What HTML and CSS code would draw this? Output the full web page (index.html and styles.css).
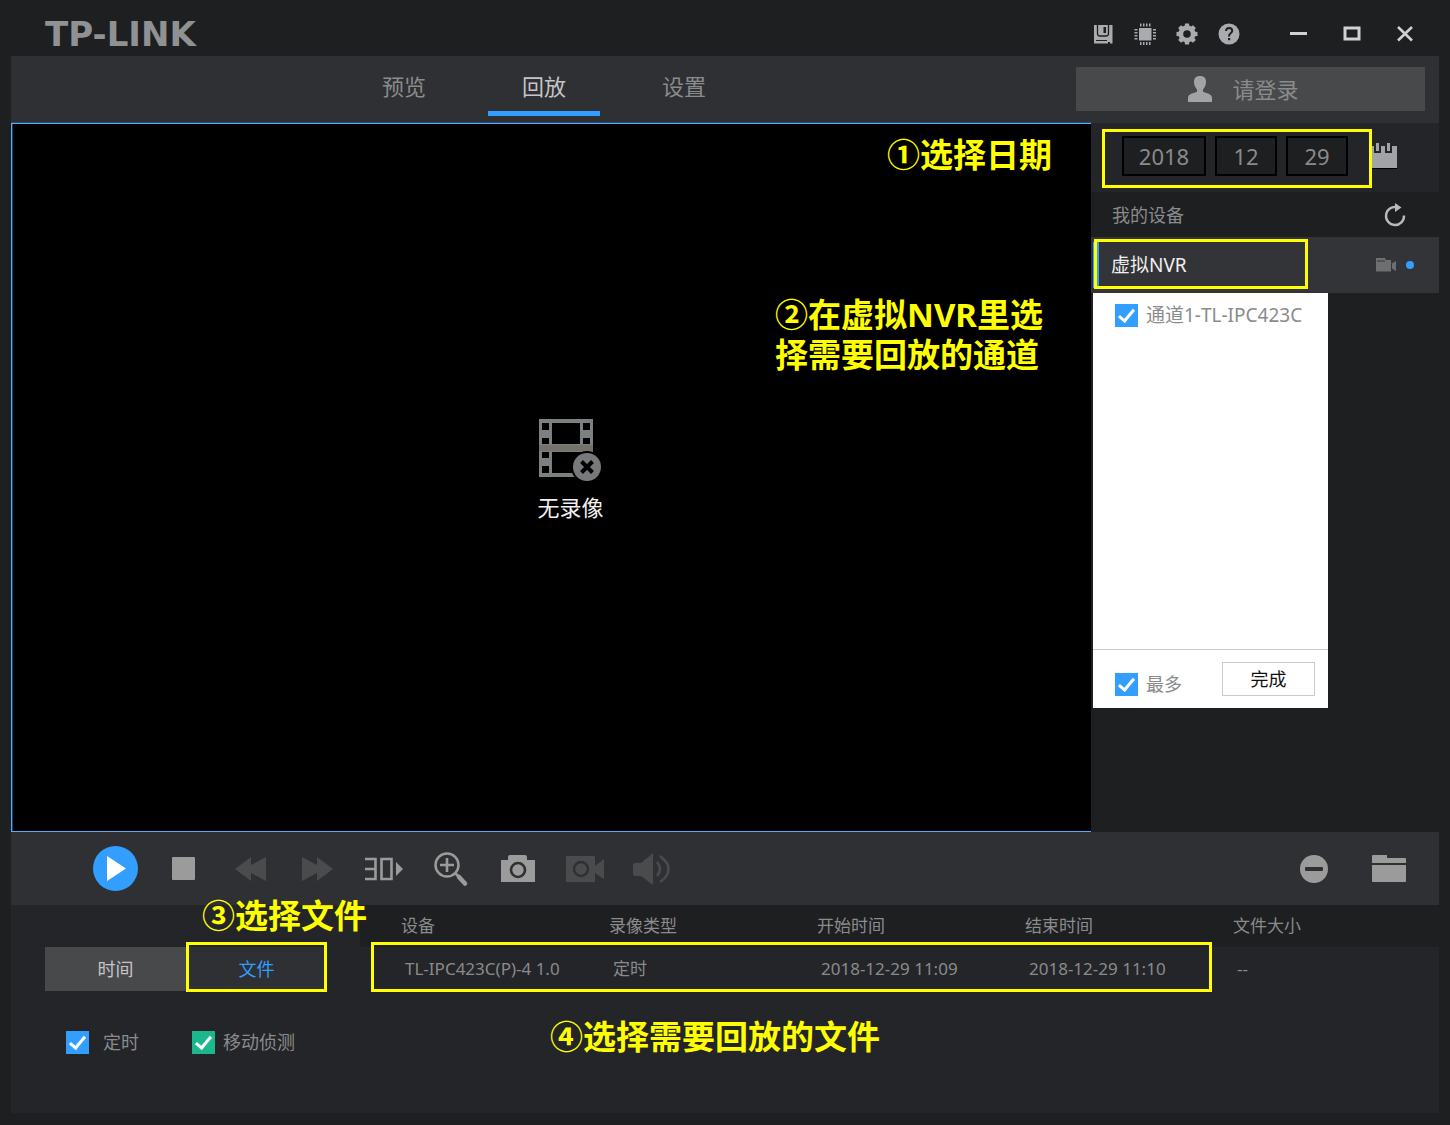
FILE: index.html
```html
<!DOCTYPE html>
<html lang="zh-CN">
<head>
<meta charset="utf-8">
<meta name="viewport" content="width=device-width, initial-scale=1">
<title>TP-LINK</title>
<link rel="stylesheet" href="styles.css">
</head>
<body>
<div class="app">
  <header class="titlebar">
    <h1 class="logo">TP-LINK</h1>
    <div class="tools">
      <button class="icon-btn" type="button" aria-label="存储"><svg width="22" height="22" viewBox="0 0 22 22"><path fill="#a9abae" d="M2 2h18.500v18.500H2z"/><path fill="none" stroke="#1e1f21" stroke-width="1.300" d="M5.500 2v8.500q0 2.500 2.500 2.500h6q2.500 0 2.500-2.500V2"/><path fill="#1e1f21" d="M11.500 4h2.500v6h-2.500zM4 17h11v1H4zM16 19h2v2h-2z"/></svg></button>
      <button class="icon-btn" type="button" aria-label="处理器"><svg width="22" height="22" viewBox="0 0 22 22"><path fill="#a9abae" d="M5 5h12.500v12.500H5z"/><path stroke="#a9abae" stroke-width="3" stroke-dasharray="1.500 1.500" d="M6 2h11M6 20.500h11M2 6v11M20.500 6v11"/></svg></button>
      <button class="icon-btn" type="button" aria-label="系统设置"><svg width="22" height="22" viewBox="0 0 22 22"><g fill="#a9abae"><circle cx="11" cy="11" r="8.500"/><path id="t" d="M9 0.500h4l.6 4H8.400zM9 21.500h4l.6-4H8.400z"/><use href="#t" transform="rotate(45 11 11)"/><use href="#t" transform="rotate(90 11 11)"/><use href="#t" transform="rotate(135 11 11)"/></g><circle cx="11" cy="11" r="3.800" fill="#1e1f21"/></svg></button>
      <button class="icon-btn" type="button" aria-label="帮助"><svg width="22" height="22" viewBox="0 0 22 22"><circle cx="11" cy="11" r="10.500" fill="#a9abae"/><path fill="none" stroke="#1e1f21" stroke-width="2" d="M8 8q.3-3 3.200-3t3 2.700q0 1.500-1.600 2.600T11 13.500"/><path fill="#1e1f21" d="M10 15h2.200v2.200H10z"/></svg></button>
    </div>
    <div class="window-buttons">
      <button class="icon-btn" type="button" aria-label="最小化"><svg width="18" height="18" viewBox="0 0 18 18"><path fill="#d0d1d3" d="M0 7h17v3H0z"/></svg></button>
      <button class="icon-btn" type="button" aria-label="最大化"><svg width="18" height="18" viewBox="0 0 18 18"><path fill="none" stroke="#d0d1d3" stroke-width="3" d="M2 3h14v11H2z"/></svg></button>
      <button class="icon-btn" type="button" aria-label="关闭"><svg width="18" height="18" viewBox="0 0 18 18"><path stroke="#d0d1d3" stroke-width="2.600" d="M2 2l14 13.500M16 2L2 15.500"/></svg></button>
    </div>
  </header>

  <div class="navbar">
    <nav class="tabs">
      <a class="tab" href="#preview">预览</a>
      <a class="tab tab-active" href="#playback" aria-current="page">回放</a>
      <a class="tab" href="#settings">设置</a>
    </nav>
    <button class="login" type="button"><svg width="24" height="26" viewBox="0 0 24 26"><path fill="#a2a3a7" d="M12 0c4 0 6 2 6 6 0 3.500-1.500 5.500-3 7.500v2.200c3 1.300 9 1.800 9 6.300v4H0v-4c0-4.500 6-5 9-6.300v-2.200C7.500 11.500 6 9.500 6 6c0-4 2-6 6-6z"/></svg>请登录</button>
  </div>

  <main class="main">
    <section class="video">
      <div class="empty">
        <svg width="62" height="62" viewBox="0 0 62 62"><path fill="#7d8080" fill-rule="evenodd" d="M0 0h54v58H0zM3 4v7h7V4zM3 19v6h7v-6zM3 33v6h7v-6zM3 47v7h7v-7zM13 4v21h28V4zM13 33v21h28V33zM44 4v7h7V4zM44 19v6h7v-6z"/><path fill="#74726a" d="M0 26h54v6H0z"/><path fill="#000" d="M41 33h14v25H41z"/><circle cx="48" cy="48" r="16" fill="#000"/><circle cx="48" cy="48" r="14" fill="#77797a"/><path stroke="#000" stroke-width="4" d="M42.500 42.500l11 11M53.500 42.500l-11 11"/></svg>
        <p class="empty-text">无录像</p>
      </div>
      <p class="note note-date">①选择日期</p>
      <p class="note note-channel">②在虚拟NVR里选<br>择需要回放的通道</p>
    </section>

    <aside class="side">
      <div class="dates">
        <input class="date-field date-year" type="text" value="2018" aria-label="年">
        <input class="date-field" type="text" value="12" aria-label="月">
        <input class="date-field" type="text" value="29" aria-label="日">
        <button class="icon-btn calendar" type="button" aria-label="日历"><svg width="28" height="28" viewBox="0 0 28 28"><path fill="#a2a3a7" d="M0 4h28v22H0z"/><path fill="#000" d="M0 26h28v1H0z"/><path fill="#242528" d="M5 0h7v11H5zM16 0h7v11h-7z"/><path fill="#a2a3a7" d="M7 1h3v8H7zM18 1h3v8h-3z"/></svg></button>
        <span class="mark mark-date"></span>
      </div>
      <div class="side-head">
        <h2 class="side-title">我的设备</h2>
        <button class="icon-btn" type="button" aria-label="刷新"><svg width="24" height="24" viewBox="0 0 24 24"><path fill="none" stroke="#b9babc" stroke-width="2.400" d="M14 4.200A9 9 0 1 0 21 12.500"/><path fill="#b9babc" d="M12 0l6.500 4.500L12 9z"/></svg></button>
      </div>
      <div class="device">
        <span class="device-name">虚拟NVR</span>
        <svg width="20" height="14" viewBox="0 0 20 14"><path fill="#6d6f70" d="M0 0h9l1 2h5v4l5-3v10l-5-3v3.500H0z"/><path fill="#333437" d="M1 2.500h8v1H1zM15 6h1v5h-1z"/></svg>
        <span class="device-dot"></span>
        <span class="mark mark-device"></span>
      </div>
      <div class="popup">
        <div class="channels">
          <label class="check channel"><input class="box" type="checkbox" checked><span class="channel-name">通道1-TL-IPC423C</span></label>
        </div>
        <div class="popup-foot">
          <label class="check check-max"><input class="box" type="checkbox" checked>最多</label>
          <button class="done" type="button">完成</button>
        </div>
      </div>
    </aside>
  </main>

  <div class="controls">
    <div class="playback">
      <button class="ctl" type="button" aria-label="播放"><svg width="45" height="45" viewBox="0 0 45 45"><circle cx="22.500" cy="22.500" r="22.500" fill="#329eff"/><path fill="#fff" d="M14 10l19 12.500L14 35z"/></svg></button>
      <button class="ctl" type="button" aria-label="停止"><svg width="24" height="24" viewBox="0 0 24 24"><rect x="1" y="0" width="23" height="23" rx="1" fill="#9b9b9b"/></svg></button>
      <button class="ctl" type="button" aria-label="快退"><svg width="32" height="24" viewBox="0 0 32 24"><path fill="#4a4b4d" d="M1 12L17 0v8L32 0v24l-15-8v8z"/></svg></button>
      <button class="ctl" type="button" aria-label="快进"><svg width="32" height="24" viewBox="0 0 32 24"><path fill="#4a4b4d" d="M32 12L16 0v8L1 0v24l15-8v8z"/></svg></button>
      <button class="ctl" type="button" aria-label="30秒"><svg width="40" height="24" viewBox="0 0 40 24"><path fill="none" stroke="#9b9b9b" stroke-width="2.600" d="M1 2h10.500v20H1M1 12h10M17.500 2h10v20h-10z"/><path fill="#9b9b9b" d="M32 5l7 7-7 7z"/></svg></button>
      <button class="ctl" type="button" aria-label="放大"><svg width="36" height="36" viewBox="0 0 36 36"><circle cx="14" cy="14" r="11.500" fill="none" stroke="#9b9b9b" stroke-width="2.500"/><path stroke="#9b9b9b" stroke-width="2.600" d="M7 14h14M14 7v14M22 22l4 4"/><path stroke="#9b9b9b" stroke-width="4.500" stroke-linecap="round" d="M26 26l6 6.500"/></svg></button>
      <button class="ctl" type="button" aria-label="截图"><svg width="34" height="28" viewBox="0 0 34 28"><path fill="#9b9b9b" d="M0 5h7V2q0-2 2-2h15q2 0 2 2v3h8v22H0z"/><circle cx="17" cy="15" r="7" fill="#9b9b9b" stroke="#2f3033" stroke-width="2.600"/></svg></button>
      <button class="ctl" type="button" aria-label="录像"><svg width="38" height="26" viewBox="0 0 38 26"><path fill="#4a4b4d" d="M0 0h29v10l9-7v20l-9-6v9H0z"/><circle cx="15" cy="13" r="7" fill="#4a4b4d" stroke="#2f3033" stroke-width="2.400"/></svg></button>
      <button class="ctl" type="button" aria-label="音量"><svg width="38" height="32" viewBox="0 0 38 32"><path fill="#4a4b4d" d="M0 12q0-2 2-2h6L20 0v32L8 23H2q-2 0-2-2z"/><path fill="none" stroke="#4a4b4d" stroke-width="2.600" d="M24 9q6 7 0 14M27 3q5 4 7.500 8 2 5 0 10-2.500 5-7.500 8"/></svg></button>
    </div>
    <div class="extras">
      <button class="ctl" type="button" aria-label="移除"><svg width="28" height="28" viewBox="0 0 28 28"><circle cx="14" cy="14" r="14" fill="#9b9b9b"/><rect x="5" y="12" width="18" height="4" rx="1" fill="#2f3033"/></svg></button>
      <button class="ctl" type="button" aria-label="打开文件夹"><svg width="34" height="28" viewBox="0 0 34 28"><path fill="#9b9b9b" d="M0 1q0-1 1-1h14v3h18q1 0 1 1v4H0zM0 10h34v16q0 1-1 1H1q-1 0-1-1z"/></svg></button>
    </div>
  </div>

  <div class="bottom">
    <section class="filters">
      <div class="modes">
        <button class="mode" type="button">时间</button>
        <button class="mode mode-active" type="button">文件</button>
        <span class="mark mark-mode"></span>
      </div>
      <div class="types">
        <label class="check check-timed"><input class="box" type="checkbox" checked>定时</label>
        <label class="check"><input class="box box-green" type="checkbox" checked>移动侦测</label>
      </div>
      <p class="note note-mode">③选择文件</p>
    </section>
    <section class="files">
      <table class="file-table">
        <thead><tr><th>设备</th><th>录像类型</th><th>开始时间</th><th>结束时间</th><th class="col-size">文件大小</th></tr></thead>
        <tbody><tr><td>TL-IPC423C(P)-4 1.0</td><td>定时</td><td>2018-12-29 11:09</td><td>2018-12-29 11:10</td><td>--</td></tr></tbody>
      </table>
      <span class="mark mark-file"></span>
      <p class="note note-file">④选择需要回放的文件</p>
    </section>
  </div>
</div>
</body>
</html>
```
FILE: styles.css
```css
* { box-sizing: border-box; }

body {
  margin: 0;
  background: #1e1f21;
  color: #8a8b8d;
  font: 18px/24px "Noto Sans", "Noto Sans CJK SC", sans-serif;
}

h1, h2, p { margin: 0; }
svg { display: block; }
button, input { margin: 0; font: inherit; color: inherit; }
button { padding: 0; border: 0; background: none; cursor: pointer; }

.app {
  display: flex;
  flex-direction: column;
  min-height: 100vh;
  padding: 0 11px 12px;
}

/* Title bar */
.titlebar {
  display: flex;
  align-items: center;
  height: 56px;
  padding: 11px 25px 0 34px;
}
.logo {
  margin-right: auto;
  color: #8f9193;
  font: bold 34px/36px "DejaVu Sans", sans-serif;
}
.tools { display: flex; gap: 20px; }
.window-buttons { display: flex; gap: 35px; margin-left: 50px; }

/* Navigation */
.navbar {
  display: flex;
  justify-content: space-between;
  height: 67px;
  padding: 0 14px 0 337px;
  background: #2f3033;
  font-size: 22px;
}
.tabs { display: flex; gap: 28px; }
.tab {
  width: 112px;
  height: 60px;
  border-bottom: 5px solid transparent;
  color: #8a8b8d;
  line-height: 60px;
  text-align: center;
  text-decoration: none;
}
.tab-active { border-color: #329eff; color: #c4c5c7; }
.login {
  display: flex;
  align-items: center;
  justify-content: center;
  gap: 20px;
  width: 349px;
  height: 44px;
  margin-top: 11px;
  padding-right: 14px;
  background: #48494b;
}

/* Video and device list */
.main {
  display: grid;
  grid-template-columns: 1fr 348px;
  flex: 1;
}
.video {
  position: relative;
  display: flex;
  align-items: center;
  justify-content: center;
  padding: 0 0 14px 38px;
  border: solid #55adff;
  border-width: 1px 0 1px 1px;
  background: #000;
  box-shadow: inset 1px 0 #12406b, 0 -1px #28496b;
}
.empty { display: flex; flex-direction: column; align-items: center; gap: 10px; }
.empty-text { color: #f0f0f0; font-size: 22px; line-height: 32px; }

.dates {
  position: relative;
  display: flex;
  align-items: center;
  gap: 9px;
  height: 69px;
  padding: 0 0 3px 31px;
  background: #242528;
}
.date-field {
  width: 62px;
  height: 40px;
  padding: 0;
  border: 2px solid #000;
  background: #1e1f21;
  font-size: 22px;
  text-align: center;
}
.date-year { width: 84px; }
.calendar { margin-left: 12px; }
.side-head {
  display: flex;
  align-items: center;
  justify-content: space-between;
  height: 45px;
  padding: 0 32px 0 21px;
}
.side-title { font-size: 18px; font-weight: normal; }
.device {
  position: relative;
  display: flex;
  align-items: center;
  height: 56px;
  padding: 0 25px 0 20px;
  background: #333437;
}
.device::before {
  content: "";
  position: absolute;
  top: 5px;
  left: 2px;
  width: 6px;
  height: 46px;
  background: #329eff;
}
.device-name { margin-right: auto; color: #f0f0f0; font-size: 19px; }
.device-dot {
  width: 8px;
  height: 8px;
  margin-left: 10px;
  border-radius: 50%;
  background: #329eff;
}

.popup { width: 235px; margin-left: 2px; background: #fff; }
.channels { height: 356px; padding: 10px 22px; }
.channel-name { overflow: hidden; font-size: 19px; white-space: nowrap; }
.popup-foot {
  display: flex;
  align-items: center;
  justify-content: space-between;
  height: 59px;
  padding: 4px 13px 4px 22px;
  border-top: 1px solid #c8cacb;
}
.check-max { padding-top: 10px; }
.done {
  width: 93px;
  height: 34px;
  border: 1px solid #c8cbcb;
  color: #111;
}

/* Tick boxes */
.check { display: flex; align-items: center; gap: 8px; }
.check-timed { gap: 14px; }
.box {
  display: flex;
  flex: none;
  align-items: flex-start;
  justify-content: center;
  width: 23px;
  height: 23px;
  padding-top: 2px;
  appearance: none;
  background: #329eff;
}
.box-green { background: #1db78e; }
.box:checked::before {
  content: "";
  box-sizing: border-box;
  width: 9px;
  height: 16px;
  border: solid #fff;
  border-width: 0 3px 3px 0;
  transform: rotate(40deg);
}

/* Playback controls */
.controls {
  display: flex;
  align-items: center;
  justify-content: space-between;
  height: 73px;
  padding: 0 28px 0 82px;
  background: #2f3033;
}
.playback { display: flex; gap: 22px; }
.extras { display: flex; gap: 30px; }
.ctl {
  display: flex;
  align-items: center;
  justify-content: center;
  width: 45px;
  height: 45px;
}

/* Recording files */
.bottom {
  display: grid;
  grid-template-columns: 349px 1fr;
  min-height: 208px;
  background: #242528;
}
.filters { position: relative; z-index: 1; padding: 42px 33px 0 34px; }
.modes { position: relative; display: flex; }
.mode { flex: 1; height: 44px; background: #48494b; color: #c4c5c7; }
.mode-active { background: #2f3033; color: #329eff; }
.types { display: flex; gap: 53px; padding: 39px 0 0 21px; }
.files { position: relative; }
.file-table {
  width: 100%;
  border-collapse: collapse;
  table-layout: fixed;
  font-size: 17px;
}
.file-table th {
  width: 208px;
  height: 42px;
  padding: 0 0 0 41px;
  background: #1e1f21;
  font-weight: normal;
  text-align: left;
}
.file-table th.col-size { width: auto; }
.file-table td { height: 44px; padding: 0 0 0 45px; white-space: nowrap; }

/* Step annotations */
.note {
  position: absolute;
  color: #ff0;
  font-size: 33px;
  font-weight: bold;
  line-height: 40px;
  white-space: nowrap;
}
.note-date { top: 11px; right: 39px; }
.note-channel { top: 171px; right: 48px; }
.note-mode { top: -9px; left: 191px; }
.note-file { top: 112px; left: 190px; }

.mark { position: absolute; border: 3px solid #ff0; pointer-events: none; }
.mark-date { top: 6px; left: 11px; width: 270px; height: 59px; }
.mark-device { top: 2px; left: 3px; width: 214px; height: 50px; }
.mark-mode { top: -5px; right: 0; width: 141px; height: 50px; }
.mark-file { top: 37px; left: 11px; width: 841px; height: 50px; }
```
